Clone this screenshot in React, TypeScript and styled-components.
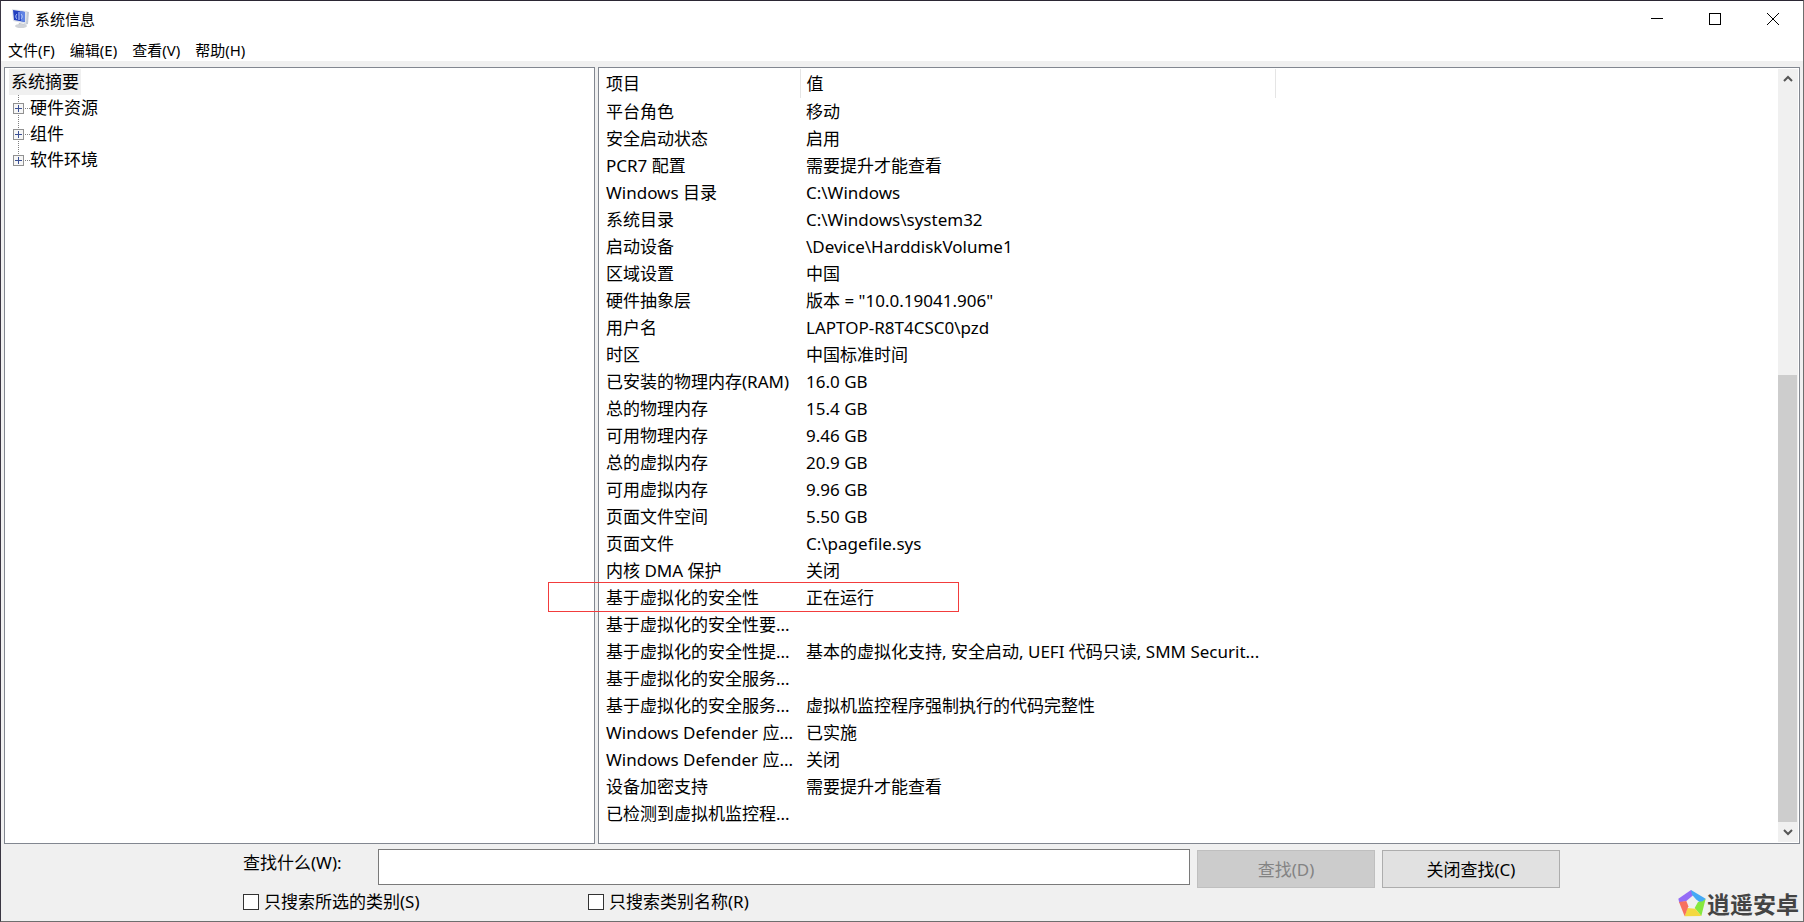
import React from 'react';
import styled, { createGlobalStyle } from 'styled-components';

const uiFont = `"Noto Sans", "Noto Sans CJK SC", sans-serif`;

const GlobalStyle = createGlobalStyle`
  *, *::before, *::after { box-sizing: border-box; }
  body { margin: 0; background: #f0f0f0; color: #000; font: 17px/27px ${uiFont}; }
  button, input { font: inherit; color: inherit; }
`;

const Window = styled.div`
  display: flex;
  flex-direction: column;
  min-height: 100vh;
  position: relative;
  border: 1px solid #6e6e6e;
  border-top-color: #2b2734;
  border-left-color: #3a3642;
`;

const TitleBar = styled.header`
  display: flex;
  align-items: center;
  height: 36px;
  padding: 0 1px 0 10px;
  background: #fff;
`;

const Title = styled.h1`
  flex: 1;
  margin: 0;
  padding-left: 5px;
  font-size: 15px;
  font-weight: 400;
`;

const CaptionButton = styled.button`
  display: grid;
  place-items: center;
  width: 58px;
  height: 36px;
  padding: 0;
  border: 0;
  background: none;
`;

const MenuBar = styled.nav`
  display: flex;
  gap: 15px;
  height: 24px;
  padding-left: 7px;
  background: #fff;
`;

const MenuButton = styled.button`
  padding: 0;
  border: 0;
  background: none;
  font-size: 15px;
  line-height: 26px;
`;

const Panes = styled.main`
  flex: 1;
  display: grid;
  grid-template-columns: minmax(0, 591fr) minmax(0, 1202fr);
  gap: 3px;
  padding: 6px 3px 0;
`;

const Pane = styled.section`
  display: flex;
  min-width: 0;
  padding: 1px;
  border: 1px solid #828790;
  background: #fff;
`;

const Tree = styled.ul`
  margin: 0;
  padding: 0 0 0 3px;
  list-style: none;
  line-height: 26px;
`;

const TreeRoot = styled.span`
  display: block;
  width: 72px;
  height: 26px;
  padding-left: 2px;
  background: #f0f0f0;
`;

const Branch = styled.ul`
  margin: 0;
  padding: 0 0 0 4px;
  list-style: none;
`;

const BranchItem = styled.li`
  display: flex;
  align-items: center;
  height: 26px;
`;

const Expander = styled.button`
  display: flex;
  width: 17px;
  height: 26px;
  padding: 0;
  border: 0;
  background: none;
`;

const Table = styled.table`
  flex: 1;
  align-self: flex-start;
  min-width: 0;
  table-layout: fixed;
  border-collapse: collapse;
`;

const HeadCell = styled.th<{ $divided?: boolean }>`
  height: 29px;
  padding: 0 6px;
  border-right: ${p => (p.$divided ? '1px solid #e5e5e5' : '0')};
  font-weight: 400;
  text-align: left;
`;

const Cell = styled.td`
  height: 27px;
  padding: 0 0 0 6px;
  white-space: nowrap;
`;

const ScrollBar = styled.div`
  display: flex;
  flex-direction: column;
  width: 20px;
  background: #f0f0f0;
`;

const ScrollButton = styled.button`
  display: grid;
  place-items: center;
  height: 20px;
  padding: 0;
  border: 0;
  background: none;
`;

const Track = styled.div`
  flex: 1;
  display: flex;
  flex-direction: column;
  justify-content: flex-end;
  padding-right: 1px;
`;

const Thumb = styled.div`
  height: 61%;
  background: #cdcdcd;
`;

const MarkedRow = styled.tr`
  position: relative;
`;

const Marker = styled.span`
  position: absolute;
  top: -2px;
  left: -52px;
  width: 411px;
  height: 30px;
  border: 1px solid #f23c3c;
  pointer-events: none;
`;

const Finder = styled.form`
  display: grid;
  grid-template-columns: 128px minmax(0, 1fr) 178px 178px;
  column-gap: 7px;
  align-items: start;
  align-content: start;
  height: 77px;
  padding: 5px 243px 0 242px;
`;

const FindInput = styled.input`
  width: 100%;
  height: 36px;
  border: 1px solid #7a7a7a;
  background: #fff;
`;

const PushButton = styled.button`
  height: 38px;
  margin-top: 1px;
  border: 1px solid #adadad;
  background: #e1e1e1;

  &:disabled {
    border-color: #bfbfbf;
    background: #ccc;
    color: #838383;
  }
`;

const Options = styled.div`
  grid-column: 1 / -1;
  display: grid;
  grid-template-columns: 345px 1fr;
`;

const Option = styled.label`
  display: flex;
  align-items: center;
  gap: 5px;
`;

const CheckBox = styled.input`
  appearance: none;
  width: 16px;
  height: 16px;
  margin: 0;
  border: 1px solid #333;
  background: #fff;
`;

const Watermark = styled.div`
  position: absolute;
  right: 4px;
  bottom: 4px;
  display: flex;
  align-items: center;
  gap: 1px;
  color: #444;
  font: 700 23px/28px "Noto Sans CJK SC", sans-serif;
`;

const rows: [string, string][] = [
  ['平台角色', '移动'],
  ['安全启动状态', '启用'],
  ['PCR7 配置', '需要提升才能查看'],
  ['Windows 目录', 'C:\\Windows'],
  ['系统目录', 'C:\\Windows\\system32'],
  ['启动设备', '\\Device\\HarddiskVolume1'],
  ['区域设置', '中国'],
  ['硬件抽象层', '版本 = "10.0.19041.906"'],
  ['用户名', 'LAPTOP-R8T4CSC0\\pzd'],
  ['时区', '中国标准时间'],
  ['已安装的物理内存(RAM)', '16.0 GB'],
  ['总的物理内存', '15.4 GB'],
  ['可用物理内存', '9.46 GB'],
  ['总的虚拟内存', '20.9 GB'],
  ['可用虚拟内存', '9.96 GB'],
  ['页面文件空间', '5.50 GB'],
  ['页面文件', 'C:\\pagefile.sys'],
  ['内核 DMA 保护', '关闭'],
  ['基于虚拟化的安全性', '正在运行'],
  ['基于虚拟化的安全性要...', ''],
  ['基于虚拟化的安全性提...', '基本的虚拟化支持, 安全启动, UEFI 代码只读, SMM Securit...'],
  ['基于虚拟化的安全服务...', ''],
  ['基于虚拟化的安全服务...', '虚拟机监控程序强制执行的代码完整性'],
  ['Windows Defender 应...', '已实施'],
  ['Windows Defender 应...', '关闭'],
  ['设备加密支持', '需要提升才能查看'],
  ['已检测到虚拟机监控程...', ''],
];

const branches = ['硬件资源', '组件', '软件环境'];

const AppIcon = () => (
  <svg width="19" height="20" viewBox="0 0 19 20" aria-hidden="true">
    <path d="M14 2l4 1-1 12-4 1z" fill="#c3cad6" />
    <path d="M1 0l15 2-1 13L2 12z" fill="#dfe3ea" />
    <path d="M2 1l12 2v10L3 11z" fill="#2340c0" />
    <path d="M9 2l5 1v10l-4-1z" fill="#5f83e4" />
    <path d="M8 3v8M6 5C4 7 5 9 6 10M10 5c2 2 1 4 0 5" stroke="#c3d4ff" fill="none" />
    <path d="M8 14l5 1v2H7z" fill="#b9bdc6" />
    <ellipse cx="10" cy="17" rx="6" ry="2" fill="#d0d3d8" />
  </svg>
);

const PlusBox = ({ last }: { last: boolean }) => (
  <svg width="17" height="26" viewBox="0 0 17 26" shapeRendering="crispEdges" aria-hidden="true">
    <path d={`M5.5 0v${last ? 8 : 26}M12 13.5h5`} stroke="#808080" strokeDasharray="1 1" />
    <rect x=".5" y="8.5" width="10" height="10" fill="#f6f6f6" stroke="#919191" />
    <path d="M2 13.5h7M5.5 10v7" stroke="#3a4f93" />
  </svg>
);

const Chevron = ({ up }: { up?: boolean }) => (
  <svg width="10" height="8" viewBox="0 0 10 8" aria-hidden="true">
    <path d={up ? 'M1 6l4-4 4 4' : 'M1 2l4 4 4-4'} fill="none" stroke="#555" strokeWidth="2" />
  </svg>
);

export default function App() {
  return (
    <Window>
      <GlobalStyle />
      <TitleBar>
        <AppIcon />
        <Title>系统信息</Title>
        <CaptionButton aria-label="最小化">
          <svg width="12" height="12" shapeRendering="crispEdges"><path d="M0 5.5h12" stroke="#000" /></svg>
        </CaptionButton>
        <CaptionButton aria-label="最大化">
          <svg width="12" height="12"><rect x=".5" y=".5" width="11" height="11" fill="none" stroke="#000" /></svg>
        </CaptionButton>
        <CaptionButton aria-label="关闭">
          <svg width="12" height="12"><path d="M0 0l12 12M12 0L0 12" stroke="#000" /></svg>
        </CaptionButton>
      </TitleBar>
      <MenuBar>
        {['文件(F)', '编辑(E)', '查看(V)', '帮助(H)'].map(m => <MenuButton key={m}>{m}</MenuButton>)}
      </MenuBar>
      <Panes>
        <Pane>
          <Tree>
            <li>
              <TreeRoot>系统摘要</TreeRoot>
              <Branch>
                {branches.map((t, i) => (
                  <BranchItem key={t}>
                    <Expander aria-label={`展开 ${t}`}><PlusBox last={i === branches.length - 1} /></Expander>
                    {t}
                  </BranchItem>
                ))}
              </Branch>
            </li>
          </Tree>
        </Pane>
        <Pane>
          <Table>
            <colgroup><col style={{ width: 200 }} /><col style={{ width: 475 }} /><col /></colgroup>
            <thead>
              <tr><HeadCell $divided>项目</HeadCell><HeadCell $divided>值</HeadCell><HeadCell /></tr>
            </thead>
            <tbody>
              {rows.map(([name, value], i) => {
                const marked = name === '基于虚拟化的安全性';
                const Row = marked ? MarkedRow : 'tr';
                return (
                  <Row key={i}>
                    <Cell>{name}{marked && <Marker />}</Cell>
                    <Cell>{value}</Cell>
                    <Cell />
                  </Row>
                );
              })}
            </tbody>
          </Table>
          <ScrollBar>
            <ScrollButton aria-label="向上滚动"><Chevron up /></ScrollButton>
            <Track><Thumb /></Track>
            <ScrollButton aria-label="向下滚动"><Chevron /></ScrollButton>
          </ScrollBar>
        </Pane>
      </Panes>
      <Finder>
        <label htmlFor="find">查找什么(W):</label>
        <FindInput id="find" type="text" />
        <PushButton type="button" disabled>查找(D)</PushButton>
        <PushButton type="button">关闭查找(C)</PushButton>
        <Options>
          <Option><CheckBox type="checkbox" />只搜索所选的类别(S)</Option>
          <Option><CheckBox type="checkbox" />只搜索类别名称(R)</Option>
        </Options>
      </Finder>
      <Watermark>
        <svg width="28" height="28" viewBox="8 11 84 84" aria-hidden="true">
          <path d="M47 14L9 40l3 12 21-5 24-20z" fill="#946cf6" />
          <path d="M47 14l44 26-11 16-18-14-12-14z" fill="#45a9f5" />
          <path d="M91 40L78 92 58 68l10-18 14-2z" fill="#86e83e" />
          <path d="M78 92l-50 1 8-25 24 2z" fill="#f4d840" />
          <path d="M28 93L11 50l22-3 6 16z" fill="#f8705e" />
        </svg>
        逍遥安卓
      </Watermark>
    </Window>
  );
}
